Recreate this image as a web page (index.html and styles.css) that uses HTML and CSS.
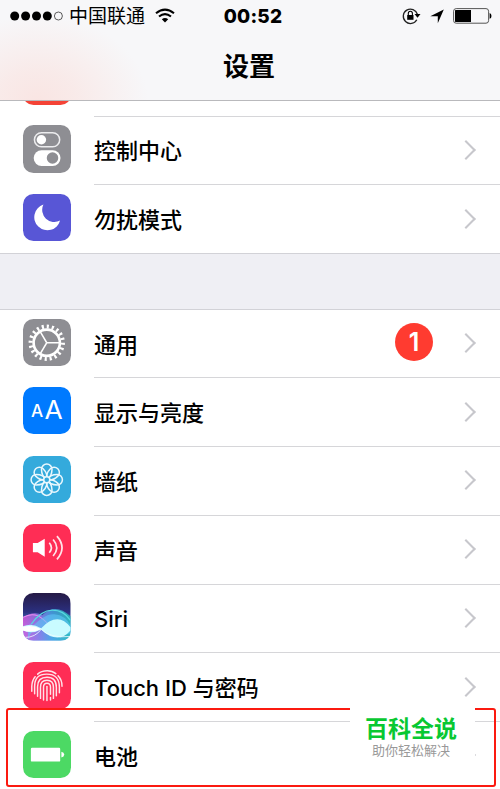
FILE: index.html
```
<!DOCTYPE html>
<html lang="zh-CN">
<head>
    <meta charset="UTF-8">
    <meta name="viewport" content="width=device-width, initial-scale=1.0">
    <title>设置</title>
    <link rel="stylesheet" href="styles.css">
</head>
<body>
    <header class="header">
        <div class="status-bar">
            <div class="carrier">
                <svg width="54" height="12" viewBox="0 0 54 12">
                    <circle cx="4.7" cy="6" r="4.5"/>
                    <circle cx="15.6" cy="6" r="4.5"/>
                    <circle cx="26.5" cy="6" r="4.5"/>
                    <circle cx="37.3" cy="6" r="4.5"/>
                    <circle cx="48.4" cy="6" r="4" fill="none" stroke="#333" stroke-width="0.8"/>
                </svg>
                <span class="carrier-name">中国联通</span>
                <svg class="wifi" width="20" height="16" viewBox="0 0 20 16" fill="none" stroke="#000" stroke-width="2.1">
                    <path d="M1 5.2Q10-2.1 19 5.2M4 8.5Q10 3.7 16 8.5"/>
                    <path d="M6.8 11.3Q10 8.5 13.2 11.3L10 14.5Z" fill="#000" stroke="none"/>
                </svg>
            </div>
            <div class="time">00:52</div>
            <div class="indicators">
                <svg width="19" height="18" viewBox="0 0 19 18">
                    <path d="M14.8 12.8A7.2 7.2 0 1 1 15.4 7.3" fill="none" stroke="#222" stroke-width="1.3"/>
                    <path d="M12.5 7H18.5L15.5 10.7Z"/>
                    <path d="M5.2 8H11.5V12.8H5.2Z"/>
                    <path d="M6.3 8V6.5A2.05 2.3 0 0 1 10.4 6.5V8" fill="none" stroke="#000" stroke-width="1.1"/>
                </svg>
                <svg class="location" width="14" height="15" viewBox="0 0 14 15"><path d="M13.8 0.5L7.8 14.2V7.2H0.3Z"/></svg>
                <svg width="39" height="16" viewBox="0 0 39 16">
                    <rect x="0.6" y="0.6" width="35" height="14.6" rx="2.6" fill="none" stroke="#555" stroke-width="1"/>
                    <path d="M2.5 2H18V14H2.5Q2 14 2 13V3Q2 2 2.5 2Z"/>
                    <path d="M36.6 5Q38.5 5.5 38.5 8T36.6 10.8Z"/>
                </svg>
            </div>
        </div>
        <h1 class="title">设置</h1>
    </header>

    <main>
        <div class="group group-top">
            <!-- Linha anterior, cortada pelo cabeçalho -->
            <div class="row-cut"><div class="icon red"></div></div>
            <div class="row">
                <svg class="icon gray" viewBox="0 0 47 47">
                    <rect x="11.3" y="7.6" width="25" height="14" rx="7" fill="none" stroke="#ececee" stroke-width="1.5"/>
                    <circle cx="18.2" cy="14.6" r="4.7" fill="#fff"/>
                    <rect x="10.6" y="25" width="26.5" height="15.5" rx="7.75" fill="#fff"/>
                    <circle cx="29.2" cy="32.7" r="5.7" fill="#8e8e93"/>
                </svg>
                <div class="row-body"><span class="label">控制中心</span><i class="arrow"></i></div>
            </div>
            <div class="row">
                <svg class="icon purple" viewBox="0 0 47 47">
                    <path d="M20.2 10.5A13 13 0 1 0 36.7 26.3A12 12 0 0 1 20.2 10.5Z" fill="#fff"/>
                </svg>
                <div class="row-body"><span class="label">勿扰模式</span><i class="arrow"></i></div>
            </div>
        </div>

        <div class="group">
            <div class="row">
                <svg class="icon gray" viewBox="0 0 47 47" fill="none" stroke="#fff">
                    <circle cx="23.5" cy="23.5" r="16" stroke-width="4" pathLength="80" stroke-dasharray="1.7 2.3"/>
                    <circle cx="23.5" cy="23.5" r="13" stroke-width="2.6"/>
                    <path d="M23.5 23.5H36M23.5 23.5L17 12.5M23.5 23.5L17 34.5" stroke-width="1.5"/>
                </svg>
                <div class="row-body"><span class="label">通用</span><span class="badge">1</span><i class="arrow"></i></div>
            </div>
            <div class="row">
                <svg class="icon blue" viewBox="0 0 47 47">
                    <text class="letter" x="8" y="30" font-size="17" font-weight="500">A</text>
                    <text class="letter" x="21.3" y="32" font-size="26" textLength="18" lengthAdjust="spacingAndGlyphs">A</text>
                </svg>
                <div class="row-body"><span class="label">显示与亮度</span><i class="arrow"></i></div>
            </div>
            <div class="row">
                <svg class="icon sky" viewBox="0 0 47 47">
                    <defs>
                        <path id="petal" d="M23.5 23.5C18.5 20.5 18.3 16.5 18.3 13.2A5.2 5.2 0 0 1 28.7 13.2C28.7 16.5 28.5 20.5 23.5 23.5Z"/>
                    </defs>
                    <g fill="none" stroke="#e9f7fd" stroke-width="1.5">
                        <use href="#petal"/>
                        <use href="#petal" transform="rotate(45 23.5 23.5)"/>
                        <use href="#petal" transform="rotate(90 23.5 23.5)"/>
                        <use href="#petal" transform="rotate(135 23.5 23.5)"/>
                        <use href="#petal" transform="rotate(180 23.5 23.5)"/>
                        <use href="#petal" transform="rotate(225 23.5 23.5)"/>
                        <use href="#petal" transform="rotate(270 23.5 23.5)"/>
                        <use href="#petal" transform="rotate(315 23.5 23.5)"/>
                        <circle cx="23.5" cy="23.5" r="3" fill="#34aadc"/>
                    </g>
                </svg>
                <div class="row-body"><span class="label">墙纸</span><i class="arrow"></i></div>
            </div>
            <div class="row">
                <svg class="icon pink" viewBox="0 0 47 47">
                    <path d="M9.8 18.8H14.5L21.5 14.5V32.5L14.5 28H9.8Z" fill="#fff"/>
                    <g fill="none" stroke="#ffe3e9" stroke-width="1.7">
                        <path d="M26 18.6Q30.2 23.5 26 28.4"/>
                        <path d="M29.8 15.3Q37 23.5 29.8 31.7"/>
                        <path d="M33.6 12Q43.6 23.5 33.6 35"/>
                    </g>
                </svg>
                <div class="row-body"><span class="label">声音</span><i class="arrow"></i></div>
            </div>
            <div class="row">
                <svg class="icon" viewBox="0 0 47 47">
                    <defs>
                        <linearGradient id="night" x1="0" y1="0" x2="0" y2="1">
                            <stop offset="0" stop-color="#251a45"/>
                            <stop offset="0.4" stop-color="#2b3080"/>
                            <stop offset="0.7" stop-color="#4d8fdb"/>
                            <stop offset="1" stop-color="#5f9fe8"/>
                        </linearGradient>
                        <linearGradient id="wave" x1="0" y1="0" x2="1" y2="0">
                            <stop offset="0" stop-color="#e255dc"/>
                            <stop offset="0.35" stop-color="#8f7cec"/>
                            <stop offset="0.6" stop-color="#4aa8e8"/>
                            <stop offset="1" stop-color="#27c5b8"/>
                        </linearGradient>
                    </defs>
                    <rect width="47" height="47" fill="url(#night)"/>
                    <path d="M0 24Q11 17 19 22Q32 9 47 23V47H0Z" fill="url(#wave)" opacity="0.8"/>
                    <path d="M0 24Q11 18 20 26T38 43" fill="none" stroke="#e88cf2" stroke-width="1"/>
                    <path d="M8 31Q18 17 29 17T47 27" fill="none" stroke="#57d8e0" stroke-width="1.2"/>
                    <path d="M5 38Q20 20 31 21T47 32V40Q30 44 20 37T5 47Z" fill="#5fc4f5" opacity="0.6"/>
                    <path d="M0 33Q9 29 18 35Q26 26 34 26Q41 26 47 34V37Q41 44 34 44Q26 44 18 36Q9 41 0 37Z" fill="#c9fbff"/>
                    <path d="M0 33.5Q9 31 18 35.5Q9 40 0 37Z" fill="#fff"/>
                    <path d="M2 44Q12 44 18 36Q27 45 47 43" fill="none" stroke="#effbff" stroke-width="0.8"/>
                </svg>
                <div class="row-body"><span class="label">Siri</span><i class="arrow"></i></div>
            </div>
            <div class="row">
                <svg class="icon pink" viewBox="0 0 47 47" fill="none" stroke="#ffe3e9" stroke-width="1.45" stroke-linecap="round">
                    <path d="M14.5 12Q18 8.7 24 8.7Q29 8.7 32.5 11.5"/>
                    <path d="M8.7 29V24Q9 18 12 14.5M34.7 13.7Q38.8 18 38.6 24"/>
                    <path d="M11.5 31.5V24Q11.5 12 23.5 12Q36 12 36 25V30.5"/>
                    <path d="M14.4 34V24.5Q14.4 15 23.7 15Q33 15 33 25V33.5"/>
                    <path d="M17.3 36V25Q17.3 18 23.7 18Q30.1 18 30.1 25V36"/>
                    <path d="M20.3 37.5V25Q20.3 21 23.7 21Q27.2 21 27.2 25V32M27.2 35V37.5"/>
                    <path d="M23.7 24.3V38"/>
                </svg>
                <div class="row-body"><span class="label">Touch ID 与密码</span><i class="arrow"></i></div>
            </div>
            <div class="row">
                <svg class="icon green" viewBox="0 0 47 47">
                    <rect x="7.8" y="16.5" width="29" height="13.8" rx="1.2" fill="#fff"/>
                    <path d="M38 20.5Q40.8 21 40.8 23.3T38 26.3Z" fill="#fff"/>
                </svg>
                <div class="row-body"><span class="label">电池</span><i class="arrow"></i></div>
            </div>
        </div>
    </main>

    <div class="highlight"></div>
    <div class="watermark">
        <strong>百科全说</strong>
        <span>助你轻松解决</span>
    </div>
</body>
</html>
```
FILE: styles.css
```
* {
    box-sizing: border-box;
}

body {
    margin: 0;
    position: relative;
    height: 789px;
    overflow: hidden;
    background-color: #fff;
    color: #000;
    font-family: Inter, "Noto Sans CJK SC", sans-serif;
}

svg {
    display: block;
    flex: none;
}

.header {
    height: 101px;
    border-bottom: 1px solid #b9b9bc;
    background: radial-gradient(ellipse 110px 85px at 38px 100px, #f9e5e3 0%, rgba(249, 231, 229, 0.8) 35%, rgba(247, 247, 249, 0) 100%), #f7f7f9;
}

.status-bar {
    display: grid;
    grid-template-columns: 1fr auto 1fr;
    align-items: center;
    height: 32px;
    padding: 0 8px 0 10px;
}

.carrier, .indicators {
    display: flex;
    align-items: center;
}

.carrier-name {
    margin-left: 5px;
    font-size: 19px;
    line-height: 30px;
    padding-top: 1px;
}

.wifi {
    margin-left: 10px;
}

.time {
    font-size: 19px;
    font-weight: 800;
    letter-spacing: 0.2px;
    margin-left: 4px;
}

.indicators {
    justify-content: flex-end;
}

.location {
    margin: 0 9px 0 9px;
}

.title {
    margin: 15px 0 0;
    font-size: 26px;
    font-weight: 700;
    line-height: 40px;
    text-align: center;
    padding-right: 2px;
}

.group {
    margin-top: 55px;
    border-top: 1px solid #d2d2d7;
    box-shadow: 0 -55px 0 #efeff4;
}

.group-top {
    margin-top: 0;
    border-top: none;
    border-bottom: 1px solid #d2d2d7;
    box-shadow: none;
}

.row-cut {
    display: flex;
    align-items: flex-end;
    height: 14.5px;
    padding: 0 0 11px 23px;
    overflow: hidden;
}

.row {
    display: flex;
    align-items: center;
    height: 68.75px;
    padding-left: 23px;
}

.icon {
    flex: none;
    width: 47.5px;
    height: 47.5px;
    margin-top: -2px;
    border-radius: 10.5px;
}

.gray {
    background-color: #8e8e93;
}

.red {
    background-color: #f44336;
}

.purple {
    background-color: #5856d6;
}

.blue {
    background-color: #007aff;
}

.sky {
    background-color: #34aadc;
}

.pink {
    background-color: #ff2d55;
}

.green {
    background-color: #4cd964;
}

.letter {
    fill: #fff;
    font-family: Inter, sans-serif;
}

.row-body {
    display: flex;
    align-items: center;
    flex: 1;
    height: 100%;
    margin-left: 23.5px;
    padding-right: 27px;
    border-top: 1px solid #d6d6d9;
}

/* A primeira linha do grupo não tem divisória */
.row:first-child {
    height: 67.3px;
}

.row:first-child .row-body {
    border-top: none;
}

.label {
    flex: 1;
    font-size: 22px;
    font-weight: 500;
    line-height: 32px;
    padding-top: 2px;
}

.badge {
    width: 38px;
    height: 38px;
    margin: -3px 26px 0 0;
    border-radius: 50%;
    background-color: #ff3b30;
    color: #fff;
    font-size: 25px;
    font-weight: 600;
    line-height: 38px;
    text-align: center;
}

.arrow {
    width: 14px;
    height: 14px;
    margin: -1px 0 0;
    border-top: 2.5px solid #c7c7cc;
    border-right: 2.5px solid #c7c7cc;
    transform: rotate(45deg);
}

.highlight {
    position: absolute;
    left: 6px;
    top: 708px;
    width: 490px;
    height: 79px;
    border: 2px solid #fb1a10;
    border-radius: 3px;
}

.watermark {
    position: absolute;
    left: 350px;
    top: 700px;
    width: 125px;
    height: 65px;
    padding: 16px 3px 0 0;
    display: flex;
    flex-direction: column;
    align-items: center;
    background-color: #fff;
}

.watermark strong {
    color: #08c832;
    font-size: 23px;
    font-weight: 700;
    line-height: 26px;
}

.watermark span {
    color: #999;
    font-size: 13px;
    line-height: 16px;
}
```
